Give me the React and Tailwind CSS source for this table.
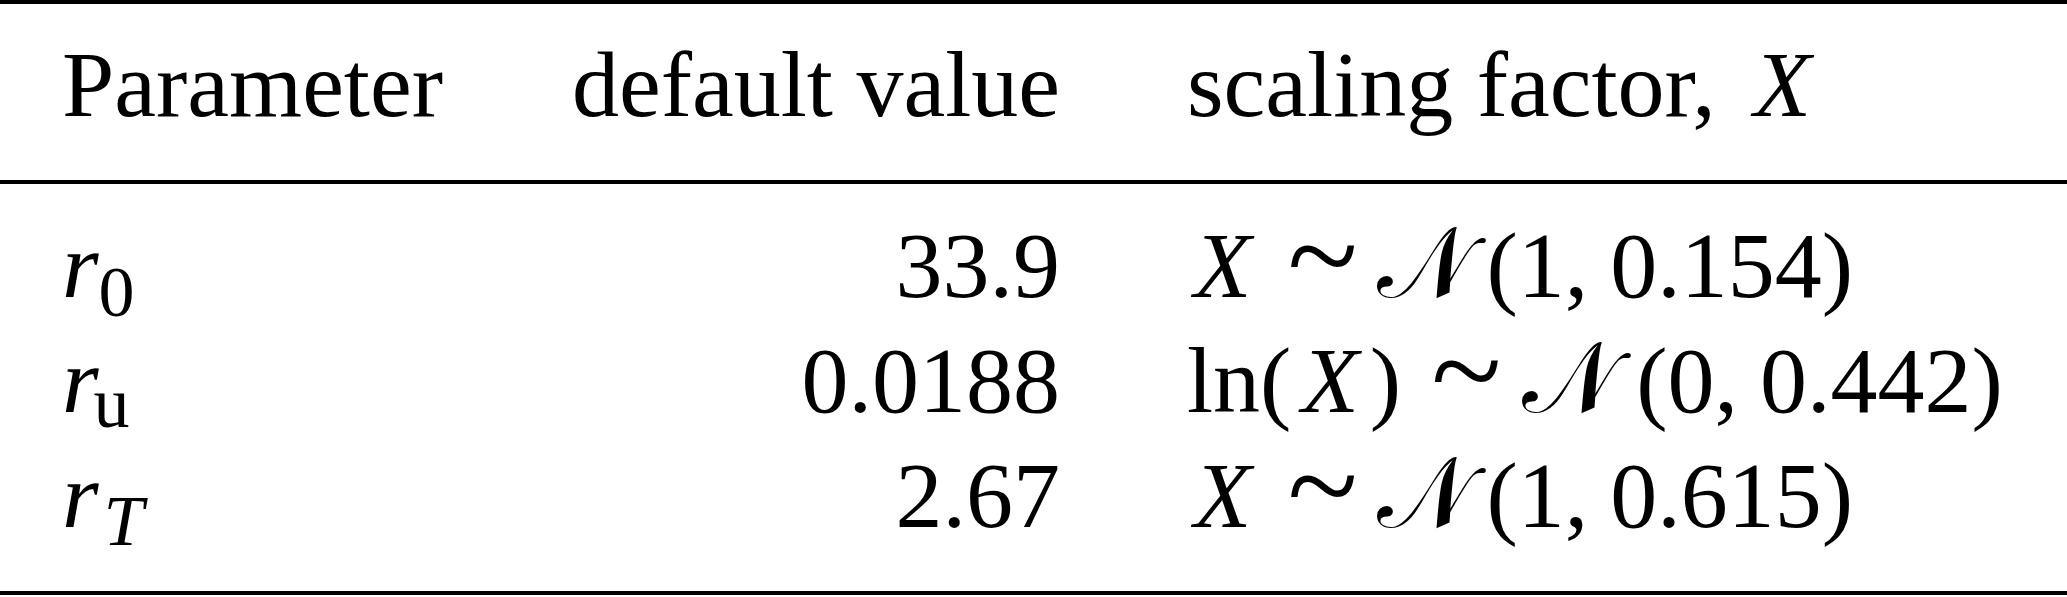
import React from "react";

function Sim({ className }) {
  return (
    <span className={"inline-block text-center text-[130px] leading-[0] align-[-2px] " + className}>
      ~
    </span>
  );
}

function Ncal({ className }) {
  return (
    <span className={"inline-block text-center text-[100px] leading-[0] font-['DejaVu_Serif'] " + className}>
      𝒩
    </span>
  );
}

export default function App() {
  return (
    <div className="w-[2067px] h-[597px] bg-white text-black font-['Liberation_Serif'] text-[94px] leading-[115px]">
      <div className="border-t-4 border-black">
        <div className="grid grid-cols-[520px_540px_1fr] pt-[23px] pb-[38px] whitespace-nowrap">
          <div className="pl-[62px]">Parameter</div>
          <div className="text-right">default value</div>
          <div className="pl-[127px]">
            scaling factor,<i className="ml-[38px]">X</i>
          </div>
        </div>
        <div className="border-t-4 border-black grid grid-cols-[520px_540px_1fr] pt-[24px] pb-[38px] whitespace-nowrap">
          <div className="pl-[62px]">
            <i>r</i>
            <span className="text-[72px] leading-[0] align-[-19px]">0</span>
          </div>
          <div className="text-right">33.9</div>
          <div className="pl-[127px]">
            <i className="ml-[7px]">X</i>
            <Sim className="ml-[36px] w-[64px]" />
            <Ncal className="ml-[25px] w-[97px]" />
            <span className="ml-[13px]">(1,</span>
            <span className="ml-[22px]">0.154)</span>
          </div>

          <div className="pl-[62px]">
            <i>r</i>
            <span className="text-[72px] leading-[0] align-[-15px] -ml-[5px]">u</span>
          </div>
          <div className="text-right">0.0188</div>
          <div className="pl-[127px]">
            <span>ln(</span>
            <i className="ml-[10px]">X</i>
            <span className="ml-[11px]">)</span>
            <Sim className="ml-[30px] w-[65px]" />
            <Ncal className="ml-[24px] w-[100px]" />
            <span className="ml-[16px]">(0,</span>
            <span className="ml-[22px]">0.442)</span>
          </div>

          <div className="pl-[62px]">
            <i>r</i>
            <i className="text-[72px] leading-[0] align-[-18px] ml-[5px]">T</i>
          </div>
          <div className="text-right">2.67</div>
          <div className="pl-[127px]">
            <i className="ml-[7px]">X</i>
            <Sim className="ml-[36px] w-[64px]" />
            <Ncal className="ml-[25px] w-[97px]" />
            <span className="ml-[13px]">(1,</span>
            <span className="ml-[22px]">0.615)</span>
          </div>
        </div>
        <div className="border-t-4 border-black" />
      </div>
    </div>
  );
}
